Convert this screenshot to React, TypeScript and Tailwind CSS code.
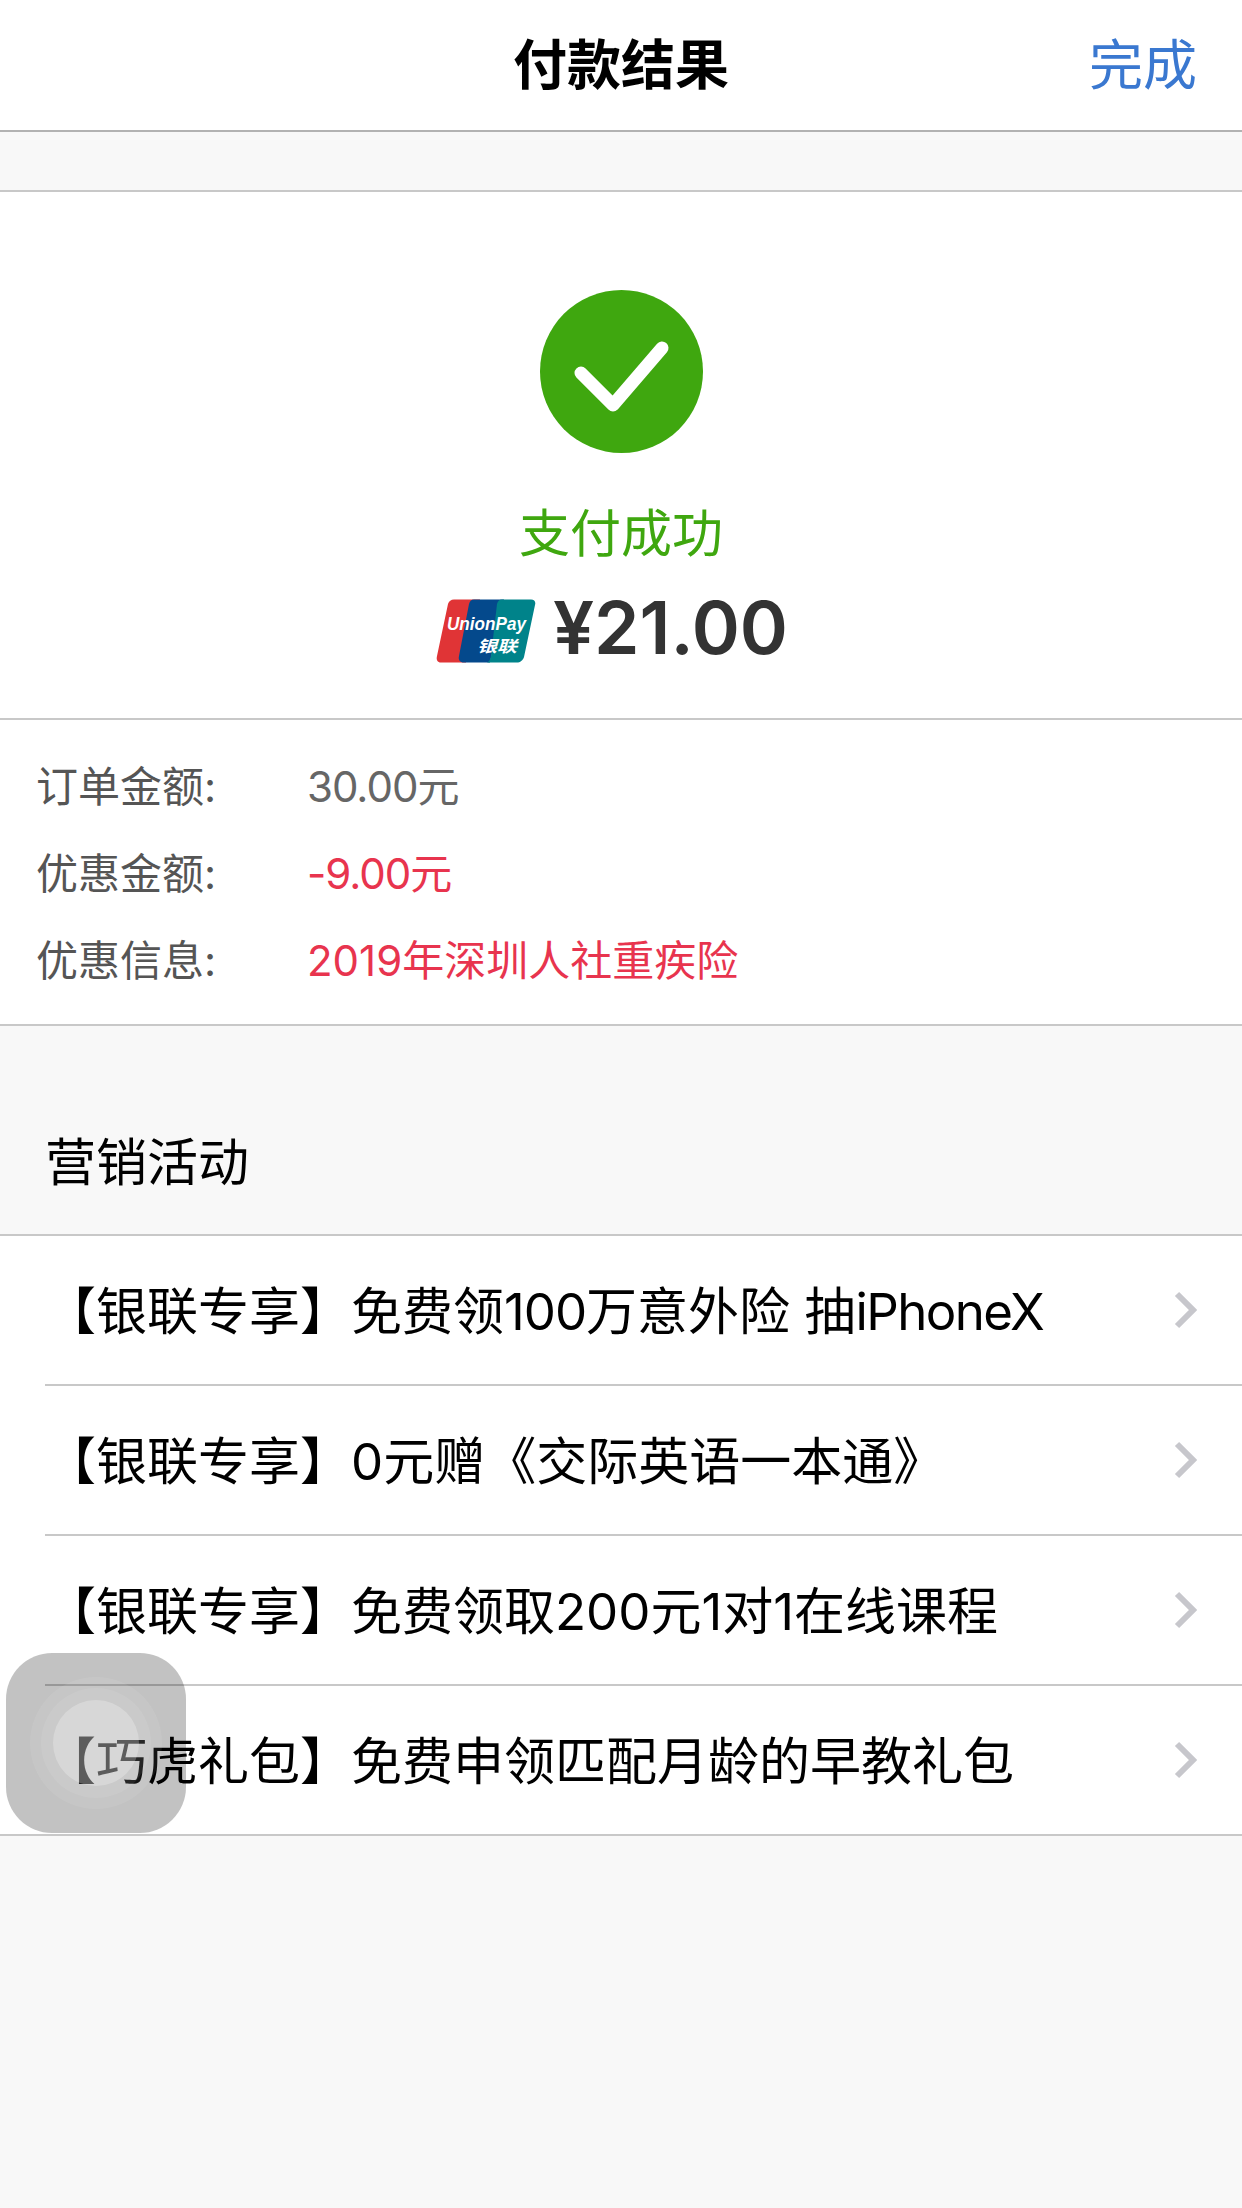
import React from 'react';

const fontStack = 'font-["Inter","Noto_Sans_CJK_SC",sans-serif]';

const offers: React.ReactNode[] = [
  <>【银联专享】免费领<span className="tracking-[-1px]">100</span>万意外险 抽<span className="tracking-[-1.6px]">iPhoneX</span></>,
  '【银联专享】0元赠《交际英语一本通》',
  '【银联专享】免费领取200元1对1在线课程',
  '【巧虎礼包】免费申领匹配月龄的早教礼包',
];

const UnionPayLogo = () => (
  <svg width="100" height="64" viewBox="0 0 100 64" className="mt-[11px] shrink-0">
    <path d="M18 0.5H44L30 63.5H5C1.5 63.5 0 61 1 57L12 5C13 2 15 0.5 18 0.5Z" fill="#e03436" />
    <path d="M38 0.5H68L54 63.5H28C24 63.5 22 61 23 57L33 5C34 2 35 0.5 38 0.5Z" fill="#04498c" />
    <path d="M66 0.5H95C98.5 0.5 100 3 99 6L88 58C87 61.5 84 63.5 81 63.5H50C53 63.5 54 61 55 57L61 5C62 2 63 0.5 66 0.5Z" fill="#00838a" />
    <text x="11" y="31" fill="#fff" fontSize="18" fontWeight="700" fontStyle="italic" fontFamily="Liberation Sans" textLength="79" lengthAdjust="spacingAndGlyphs">UnionPay</text>
    <text x="41" y="53" fill="#fff" fontSize="16" fontWeight="700" fontStyle="italic" fontFamily="Noto Sans CJK SC" textLength="40" lengthAdjust="spacingAndGlyphs">银联</text>
  </svg>
);

const InfoRow = ({ label, value, valueClass }: { label: string; value: string; valueClass: string }) => (
  <div className="flex h-[87px] items-center text-[42px]">
    <span className="w-[271px] text-[#555555]">{label}</span>
    <span className={valueClass}>{value}</span>
  </div>
);

export default function App() {
  return (
    <div lang="zh-CN" className={`relative flex h-[2208px] w-[1242px] flex-col overflow-hidden bg-[#f8f8f8] ${fontStack}`}>
      <header className="relative flex h-[132px] shrink-0 items-center justify-center border-b-2 border-[#b2b2b2] bg-white pt-[2px]">
        <h1 className="text-[54px] leading-none font-bold text-black">付款结果</h1>
        <span className="absolute right-[45px] text-[54px] leading-none text-[#3a78d0]">完成</span>
      </header>

      <div className="h-[60px] shrink-0 border-b-2 border-[#c8c8c8]" />

      <section className="flex h-[528px] shrink-0 flex-col items-center border-b-2 border-[#c8c8c8] bg-white pt-[98px]">
        <div className="flex h-[163px] w-[163px] items-center justify-center rounded-full bg-[#3fa70f]">
          <svg width="163" height="163" viewBox="0 0 163 163">
            <path d="M41 83 L73 115 L122 58" fill="none" stroke="#fff" strokeWidth="13" strokeLinecap="round" strokeLinejoin="round" />
          </svg>
        </div>
        <p className="mt-[45px] text-[51px] leading-[72px] text-[#3fa70f]">支付成功</p>
        <div className="mt-[18px] flex items-start gap-[17px] pr-[18px]">
          <UnionPayLogo />
          <span className="text-[73px] leading-[80px] font-semibold text-[#333333]">¥21.00</span>
        </div>
      </section>

      <section className="flex h-[306px] shrink-0 flex-col justify-center border-b-2 border-[#c8c8c8] bg-white pt-[2px] pl-[36px]">
        <InfoRow label="订单金额:" value="30.00元" valueClass="tracking-[-1px] text-[#666666]" />
        <InfoRow label="优惠金额:" value="-9.00元" valueClass="tracking-[-1px] text-[#e8344e]" />
        <InfoRow label="优惠信息:" value="2019年深圳人社重疾险" valueClass="text-[#e8344e]" />
      </section>

      <div className="flex h-[210px] shrink-0 items-end border-b-2 border-[#c8c8c8] pb-[36px] pl-[45px] text-[51px] leading-[70px] text-black">
        营销活动
      </div>

      <ul className="shrink-0 border-b-2 border-[#c8c8c8] bg-white pl-[45px]">
        {offers.map((offer, i) => (
          <li
            key={i}
            className={`flex items-center justify-between pr-[45px] text-[51px] text-black ${i < offers.length - 1 ? 'h-[150px] border-b-2 border-[#c8c8c8]' : 'h-[148px]'}`}
          >
            <span className="pt-[5px]">{offer}</span>
            <svg width="24" height="38" viewBox="0 0 24 38" className="shrink-0">
              <path d="M4 3 L20 19 L4 35" fill="none" stroke="#c7c7cc" strokeWidth="6" />
            </svg>
          </li>
        ))}
      </ul>

      {/* assistive touch floats above the list */}
      <div className="absolute top-[1653px] left-[6px] flex h-[180px] w-[180px] items-center justify-center rounded-[46px] bg-black/[0.24]">
        <div className="flex h-[132px] w-[132px] items-center justify-center rounded-full bg-white/[0.08]">
          <div className="flex h-[110px] w-[110px] items-center justify-center rounded-full bg-white/[0.08]">
            <div className="h-[86px] w-[86px] rounded-full bg-white/25" />
          </div>
        </div>
      </div>
    </div>
  );
}
